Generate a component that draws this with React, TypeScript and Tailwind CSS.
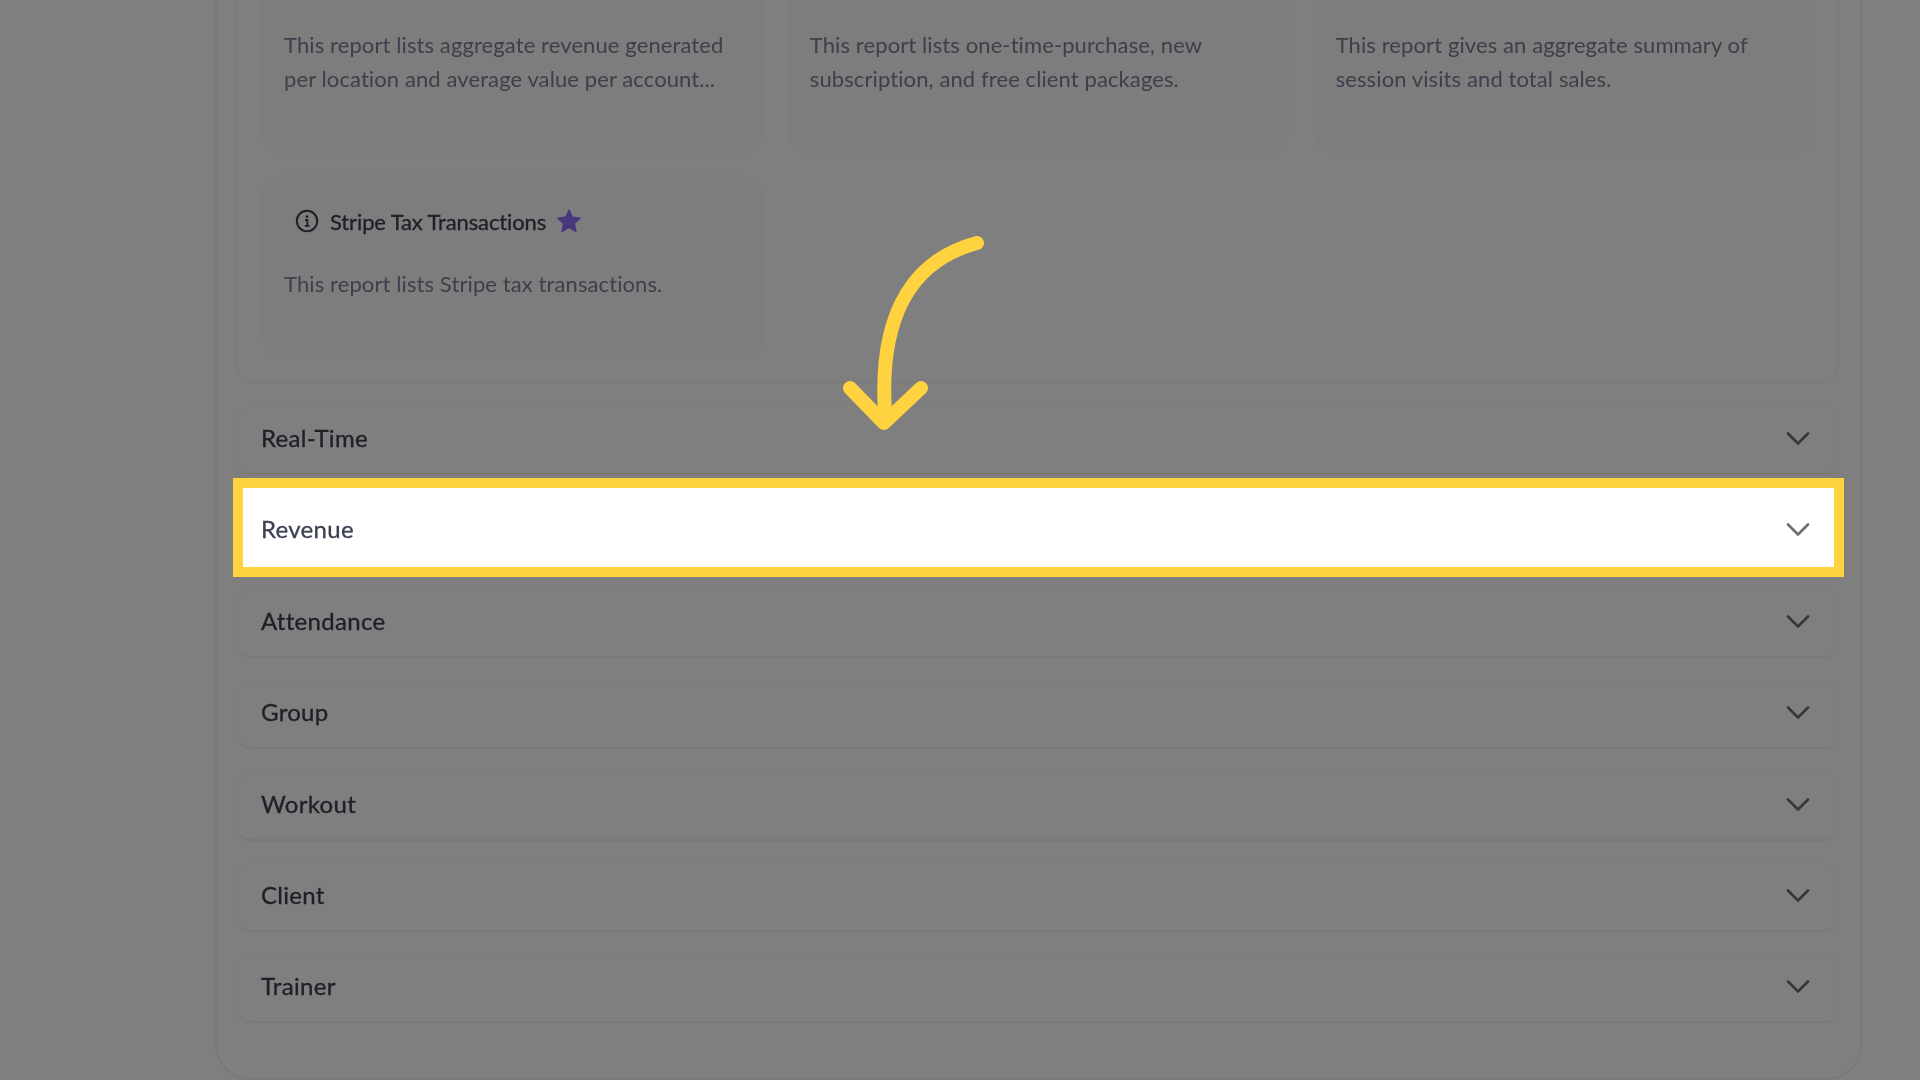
const Chevron = () => (
  <svg width="26" height="18" viewBox="0 0 26 18" fill="none" className="blur-[0.5px]">
    <path d="M3 3.5 L13 13.5 L23 3.5" stroke="#6f6f6f" strokeWidth="2.6" strokeLinecap="round" strokeLinejoin="round" />
  </svg>
);

const InfoIcon = () => (
  <svg width="24" height="24" viewBox="0 0 24 24" fill="none" className="blur-[0.5px]">
    <circle cx="12" cy="12" r="10.2" stroke="#3c4050" strokeWidth="2" />
    <path d="M10 11 H12.4 V16.6 M9.8 16.8 H14.6" stroke="#3c4050" strokeWidth="1.8" />
    <circle cx="12" cy="7.6" r="1.4" fill="#3c4050" />
  </svg>
);

const Star = () => (
  <svg width="26" height="26" viewBox="0 0 24 24" className="blur-[0.5px]">
    <path
      d="M12 2 L15 8.6 L22.4 9.4 L16.9 14.3 L18.4 21.6 L12 17.9 L5.6 21.6 L7.1 14.3 L1.6 9.4 L9 8.6 Z"
      fill="#9070f8"
      stroke="#9070f8"
      strokeWidth="1.4"
      strokeLinejoin="round"
    />
  </svg>
);

const font = "font-['Lato','Liberation_Sans',sans-serif]";

const Card = ({ title, lines }: { title?: string; lines: string[] }) => (
  <div className="rounded-[24px] bg-[#fbfbfb] pt-[29px] pb-[59px] pl-[23px]">
    {title ? (
      <div className="flex h-[34px] items-center pl-[11px]">
        <InfoIcon />
        <span className="ml-[11px] text-[22px] tracking-[-0.12px] text-[#3c4050] blur-[0.4px] [-webkit-text-stroke:0.3px_#3c4050]">{title}</span>
        <span className="ml-[10px] flex"><Star /></span>
      </div>
    ) : (
      <div className="h-[34px]" />
    )}
    <div className="mt-[29px]">
      {lines.map((l) => (
        <p key={l} className="h-[34px] text-[22px] leading-[34px] tracking-[0.1px] text-[#7a8096] blur-[0.4px]">{l}</p>
      ))}
    </div>
  </div>
);

const Row = ({ label, active }: { label: string; active?: boolean }) => (
  <div
    className={
      active
        ? "relative z-20 flex h-[68px] items-center justify-between pb-[6px] pl-[25px] pr-[28px]"
        : "flex h-[68px] items-center justify-between rounded-[16px] border-b-2 border-[#f3f3f3] bg-[#fefefe] pb-[4px] pl-[25px] pr-[28px] shadow-[0_0_3px_#f4f4f4]"
    }
  >
    {active && (
      <div className="absolute -bottom-[11px] -left-[3px] -right-[5px] -top-[20px] border-[10px] border-[#ffd23f] bg-white" />
    )}
    <span className="relative text-[24px] tracking-[0.3px] text-[#3c4050] blur-[0.4px] [-webkit-text-stroke:0.3px_#3c4050]">{label}</span>
    <span className="relative mt-[2px] flex"><Chevron /></span>
  </div>
);

export default function App() {
  return (
    <div className={`relative h-[1080px] w-[1920px] overflow-hidden bg-white ${font}`}>
      <div className="-mt-[64px] ml-[215px] w-[1647px] rounded-b-[36px] border-x-2 border-b-2 border-[#f0f0f0] pb-[55px] pl-[19px]">
        <div className="w-[1603px] rounded-b-[16px] border-x-2 border-b-2 border-[#f7f7f7] pb-[21px] pl-[23px] pr-[21px]">
          <div className="grid grid-cols-3 gap-x-[22.5px] gap-y-[20px]">
            <Card lines={["This report lists aggregate revenue generated", "per location and average value per account..."]} />
            <Card lines={["This report lists one-time-purchase, new", "subscription, and free client packages."]} />
            <Card lines={["This report gives an aggregate summary of", "session visits and total sales."]} />
            <Card title="Stripe Tax Transactions" lines={["This report lists Stripe tax transactions."]} />
          </div>
        </div>
        <div className="mt-[24px] flex w-[1603px] flex-col gap-[23.4px]">
          <Row label="Real-Time" />
          <Row label="Revenue" active />
          <Row label="Attendance" />
          <Row label="Group" />
          <Row label="Workout" />
          <Row label="Client" />
          <Row label="Trainer" />
        </div>
      </div>

      <div className="absolute inset-0 z-10 bg-black/50" />

      <svg className="absolute left-[840px] top-[230px] z-30" width="150" height="210" viewBox="840 230 150 210" fill="none">
        <path
          d="M977 243 C 920 258, 878 305, 885 413"
          stroke="#ffd23f"
          strokeWidth="14"
          strokeLinecap="round"
        />
        <path
          d="M850 388 L884 423 L921 388"
          stroke="#ffd23f"
          strokeWidth="14"
          strokeLinecap="round"
          strokeLinejoin="round"
        />
      </svg>
    </div>
  );
}
